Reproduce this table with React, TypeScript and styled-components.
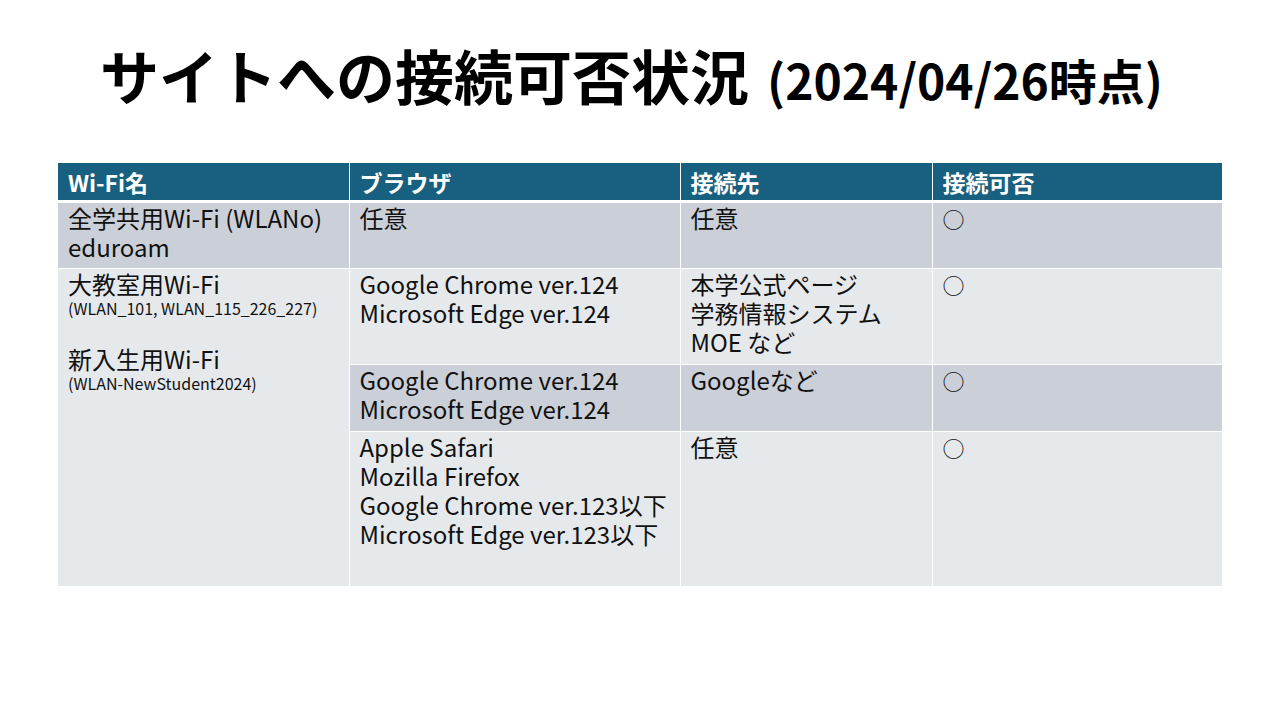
import { createGlobalStyle, styled } from "styled-components"

const GlobalStyle = createGlobalStyle`
  html, body {
    margin: 0;
    padding: 0;
    background: #ffffff;
  }
  body {
    font-family: "Noto Sans CJK JP", "Noto Sans", sans-serif;
    color: #111111;
  }
`

interface WifiName {
  name: string
  ssid: string
}

interface BrowserRow {
  browsers: string[]
  targets: string[]
  result: string
  $dark: boolean
  $height: number
}

const wifiGroup: WifiName[] = [
  { name: "大教室用Wi-Fi", ssid: "(WLAN_101, WLAN_115_226_227)" },
  { name: "新入生用Wi-Fi", ssid: "(WLAN-NewStudent2024)" },
]

const groupRows: BrowserRow[] = [
  {
    browsers: ["Google Chrome ver.124", "Microsoft Edge ver.124"],
    targets: ["本学公式ページ", "学務情報システム", "MOE など"],
    result: "○",
    $dark: false,
    $height: 96,
  },
  {
    browsers: ["Google Chrome ver.124", "Microsoft Edge ver.124"],
    targets: ["Googleなど"],
    result: "○",
    $dark: true,
    $height: 67,
  },
  {
    browsers: ["Apple Safari", "Mozilla Firefox", "Google Chrome ver.123以下", "Microsoft Edge ver.123以下"],
    targets: ["任意"],
    result: "○",
    $dark: false,
    $height: 155,
  },
]

// スライド全体
const App = () => {
  return (
    <Slide>
      <GlobalStyle />
      <Title>
        サイトへの接続可否状況<Sub>(2024/04/26時点)</Sub>
      </Title>
      <Table>
        <colgroup>
          <col style={{ width: 291 }} />
          <col style={{ width: 331 }} />
          <col style={{ width: 252 }} />
          <col style={{ width: 290 }} />
        </colgroup>
        <thead>
          <tr>
            <HeadCell>Wi-Fi名</HeadCell>
            <HeadCell>ブラウザ</HeadCell>
            <HeadCell>接続先</HeadCell>
            <HeadCell>接続可否</HeadCell>
          </tr>
        </thead>
        <tbody>
          <Row $height={67}>
            <Cell $dark>
              <Line>全学共用Wi-Fi (WLANo)</Line>
              <Line>eduroam</Line>
            </Cell>
            <Cell $dark>任意</Cell>
            <Cell $dark>任意</Cell>
            <Cell $dark>
              <Mark>○</Mark>
            </Cell>
          </Row>
          {groupRows.map((row, i) => (
            <Row key={i} $height={row.$height}>
              {i === 0 ? (
                <Cell $dark={false} rowSpan={groupRows.length}>
                  {wifiGroup.map((w, j) => (
                    <WifiBlock key={j}>
                      <Line>{w.name}</Line>
                      <Ssid>{w.ssid}</Ssid>
                    </WifiBlock>
                  ))}
                </Cell>
              ) : null}
              <Cell $dark={row.$dark}>
                {row.browsers.map((b, j) => (
                  <Line key={j}>{b}</Line>
                ))}
              </Cell>
              <Cell $dark={row.$dark}>
                {row.targets.map((t, j) => (
                  <Line key={j}>{t}</Line>
                ))}
              </Cell>
              <Cell $dark={row.$dark}>
                <Mark>{row.result}</Mark>
              </Cell>
            </Row>
          ))}
        </tbody>
      </Table>
    </Slide>
  )
}

export default App

const Slide = styled.div`
  width: 1280px;
  height: 720px;
  display: flex;
  flex-direction: column;
  padding: 37px 0 0 58px;
  box-sizing: border-box;
  overflow: hidden;
`

const Title = styled.h1`
  margin: 0 0 46px 42px;
  font-size: 59px;
  font-weight: 700;
  line-height: 76px;
  color: #000000;
  white-space: nowrap;
`

const Sub = styled.span`
  margin-left: 18px;
  font-size: 48px;
`

const Table = styled.table`
  width: 1164px;
  border-collapse: collapse;
  table-layout: fixed;
`

const HeadCell = styled.th`
  height: 37px;
  padding: 0 10px;
  background: #17607f;
  color: #ffffff;
  font-size: 23px;
  font-weight: 700;
  text-align: left;
  border-left: 1px solid #ffffff;
  border-bottom: 3px solid #ffffff;
  &:first-child {
    border-left: none;
  }
`

const Row = styled.tr<{ $height: number }>`
  height: ${(p) => p.$height}px;
`

const Cell = styled.td<{ $dark: boolean }>`
  padding: 0 10px;
  vertical-align: top;
  background: ${(p) => (p.$dark ? "#cbd0d8" : "#e6e9ec")};
  font-size: 24px;
  line-height: 29px;
  color: #111111;
  border: 1px solid #ffffff;
  &:first-child {
    border-left: none;
  }
  &:last-child {
    border-right: none;
  }
`

const Line = styled.div`
  height: 29px;
  white-space: nowrap;
`

const WifiBlock = styled.div`
  margin-bottom: 26px;
`

const Ssid = styled.div`
  font-size: 16px;
  line-height: 20px;
`

const Mark = styled.span`
  font-size: 22px;
`
